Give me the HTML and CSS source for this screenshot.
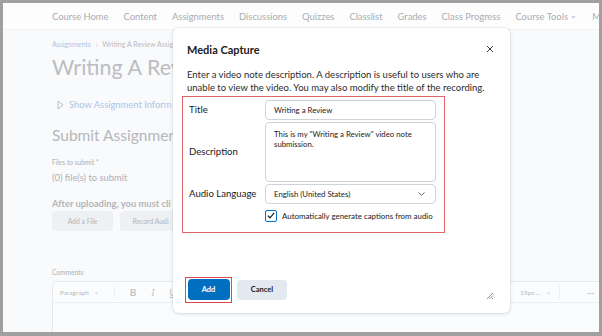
FILE: index.html
```html
<!DOCTYPE html>
<html>
  <head>
    <meta charset="utf-8">
    <meta name="viewport" content="width=device-width, initial-scale=1">
    <link rel="stylesheet" href="styles.css">
  </head>
  <body>
    <div class="frame">
      <div class="nav">
        <span>Course Home</span>
        <span>Content</span>
        <span>Assignments</span>
        <span>Discussions</span>
        <span>Quizzes</span>
        <span>Classlist</span>
        <span>Grades</span>
        <span>Class Progress</span>
        <span>Course Tools <small class="chev">&#8964;</small></span>
        <span>M</span>
      </div>

      <div class="page">
        <div class="col">
          <div class="crumbs"><span class="link">Assignments</span> <span class="sep">&rsaquo;</span> Writing A Review Assig</div>
          <h1>Writing A Revi</h1>
          <div class="show-info">
            <svg width="7" height="10" viewBox="0 0 7 10"><path d="M1 1 L6 5 L1 9 Z" fill="none" stroke="#b9bdc2" stroke-width="1"/></svg>
            <span>Show Assignment Inform</span>
          </div>
          <h2>Submit Assignmen</h2>
          <div class="tiny">Files to submit *</div>
          <div class="files">(0) file(s) to submit</div>
          <div class="after">After uploading, you must cli</div>
          <div class="page-buttons">
            <span class="pbtn">Add a File</span>
            <span class="pbtn">Record Audi</span>
          </div>
          <div class="tiny comments">Comments</div>
        </div>
        <div class="editor">
          <div class="toolbar">
            <span class="para">Paragraph <small>&#8964;</small></span>
            <span class="divider"></span>
            <span class="tool b">B</span>
            <span class="tool i">I</span>
            <span class="tool u">U</span>
            <span class="spacer"></span>
            <span class="size">19px ... <small>&#8964;</small></span>
            <span class="divider"></span>
            <span class="more">&middot;&middot;&middot;</span>
          </div>
        </div>
      </div>

      <div class="dialog">
        <div class="dlg-head">
          <span class="dlg-title">Media Capture</span>
          <svg class="close" width="8" height="8" viewBox="0 0 8 8"><path d="M1 1 L7 7 M7 1 L1 7" stroke="#3a3c3e" stroke-width="1"/></svg>
        </div>
        <p class="intro">Enter a video note description. A description is useful to users who are unable to view the video. You may also modify the title of the recording.</p>
        <div class="form-box">
          <div class="row">
            <label>Title</label>
            <div class="field">Writing a Review</div>
          </div>
          <div class="row">
            <label>Description</label>
            <div class="field area">This is my "Writing a Review" video note submission.</div>
          </div>
          <div class="row">
            <label>Audio Language</label>
            <div class="field select">English (United States)
              <svg width="7" height="4" viewBox="0 0 7 4"><path d="M0.5 0.5 L3.5 3.3 L6.5 0.5" fill="none" stroke="#565a5c" stroke-width="0.9"/></svg>
            </div>
          </div>
          <div class="check-row">
            <span class="box"><svg width="8" height="7" viewBox="0 0 8 7"><path d="M0.8 3.6 L3 5.8 L7.2 0.9" fill="none" stroke="#202122" stroke-width="1.3"/></svg></span>
            <span>Automatically generate captions from audio</span>
          </div>
        </div>
        <div class="dlg-foot">
          <span class="add-wrap"><span class="btn primary">Add</span></span>
          <span class="btn">Cancel</span>
          <span class="spacer"></span>
          <svg class="grip" width="8" height="8" viewBox="0 0 8 8"><path d="M7 1 L1 7 M7 3.5 L3.5 7 M7 6 L6 7" stroke="#6e7376" stroke-width="0.8"/></svg>
        </div>
      </div>
    </div>
  </body>
</html>
```

FILE: styles.css
```css
html, body { margin: 0; padding: 0 }
body { background: #a0a0a0; width: 602px; height: 336px; overflow: hidden; font-family: Lato, "Open Sans", sans-serif }
.frame { position: relative; margin: 3px 3px 0 3px; height: 329px; background: #f9fafc; overflow: hidden }

.nav { height: 26px; display: flex; align-items: center; gap: 15px; padding-left: 49px; background: #fdfdfe; border-bottom: 1px solid #f1f2f4; color: #a9acb0; font-size: 9.4px; white-space: nowrap; overflow: hidden }
.nav .chev { font-size: 8px; position: relative; top: -2px }

.page { padding-left: 49px; color: #b5b7ba; white-space: nowrap }
.col { width: 122px; overflow: hidden }
.crumbs { margin-top: 10px; font-size: 7px; color: #b9bbbe }
.crumbs .link { color: #a9c5ea }
.crumbs .sep { margin: 0 3px }
h1 { margin: 5px 0 0; font-size: 21.5px; font-weight: 400; color: #bcbdbf; line-height: 28px }
.show-info { margin-top: 18px; margin-left: 5px; display: flex; align-items: center; gap: 5px; font-size: 9.4px; color: #a9c6ea }
h2 { margin: 15px 0 0; font-size: 15.5px; font-weight: 400; color: #b5b7ba; line-height: 20px }
.tiny { font-size: 6.6px; color: #aeb0b3; margin-top: 13px }
.files { font-size: 9.4px; margin-top: 6px; color: #aeb0b3 }
.after { font-size: 9.4px; font-weight: 700; margin-top: 15px; color: #b3b5b8 }
.page-buttons { display: flex; gap: 7px; margin-top: 2px }
.pbtn { width: 61px; flex-shrink: 0; height: 20px; border-radius: 4px; background: #eef0f4; font-size: 6.8px; color: #b3b5b8; display: flex; align-items: center; justify-content: center }
.comments { margin-top: 37px }
.editor { margin-top: 5px; height: 60px; border: 1px solid #e7e9ed; border-right: 0; border-radius: 5px 0 0 5px; background: #fbfcfd }
.toolbar { height: 20px; border-bottom: 1px solid #eceef1; display: flex; align-items: center; font-size: 6.5px; color: #b6b8bb; padding-left: 7px }
.toolbar small { font-size: 6px; margin-left: 4px; position: relative; top: -1px }
.toolbar .para { width: 46px }
.divider { width: 1px; height: 12px; background: #eceef1; margin: 0 8px }
.tool { font-size: 10px; width: 20px; text-align: center; color: #c2c4c7 }
.tool.b { font-weight: 700 }
.tool.i { font-style: italic; font-family: "Liberation Serif", serif }
.tool.u { text-decoration: underline }
.spacer { flex: 1 }
.size { width: 31px }
.more { font-size: 9px; margin-left: 19px; margin-right: 2px; width: 10px }

.dialog { position: absolute; left: 170px; top: 25px; width: 337px; height: 285px; background: #fff; border-radius: 6px; box-shadow: 0 1px 4px rgba(0,0,0,0.12), 0 0 0 1px rgba(0,0,0,0.03); box-sizing: border-box; padding: 0 14px; color: #202122 }
.dlg-head { display: flex; justify-content: space-between; align-items: center; height: 18px; margin-top: 12px }
.dlg-title { font-size: 11px; font-weight: 700 }
.close { margin-right: 2px }
.intro { margin: 10px 0 0; font-size: 9.5px; line-height: 13.3px; color: #2a2b2c; width: 300px }
.form-box { margin: 1px 0 0 -5px; width: 263px; height: 137px; border: 1.5px solid #e06568; box-sizing: border-box; padding: 3px 8px 0 6px }
.row { display: flex; align-items: center; margin-bottom: 2px }
.row label { width: 76px; font-size: 9.6px }
.field { width: 171px; height: 20px; box-sizing: border-box; border: 1px solid #cdd3d9; border-radius: 4px; font-size: 7.8px; padding: 0 8px; display: flex; align-items: center }
.field.area { height: 60px; align-items: flex-start; padding-top: 6px; line-height: 10px; white-space: normal }
.field.select { justify-content: space-between; padding-right: 10px }
.check-row { display: flex; align-items: center; gap: 5px; margin: 6px 0 0 76px; font-size: 7.9px }
.box { width: 10px; height: 10px; border: 1px solid #006fbf; border-radius: 2px; display: flex; align-items: center; justify-content: center }
.dlg-foot { display: flex; align-items: center; gap: 5px; margin-top: 44px }
.add-wrap { border: 1.5px solid #e0474c; padding: 1.5px; margin-left: -2px }
.btn { height: 20px; width: 50px; border-radius: 4px; background: #e3e9f1; font-size: 7.5px; font-weight: 700; display: flex; align-items: center; justify-content: center }
.btn.primary { width: 42px; height: 21px; background: #006fbf; color: #fff }
.grip { margin-right: 2px; margin-top: 12px }
```
